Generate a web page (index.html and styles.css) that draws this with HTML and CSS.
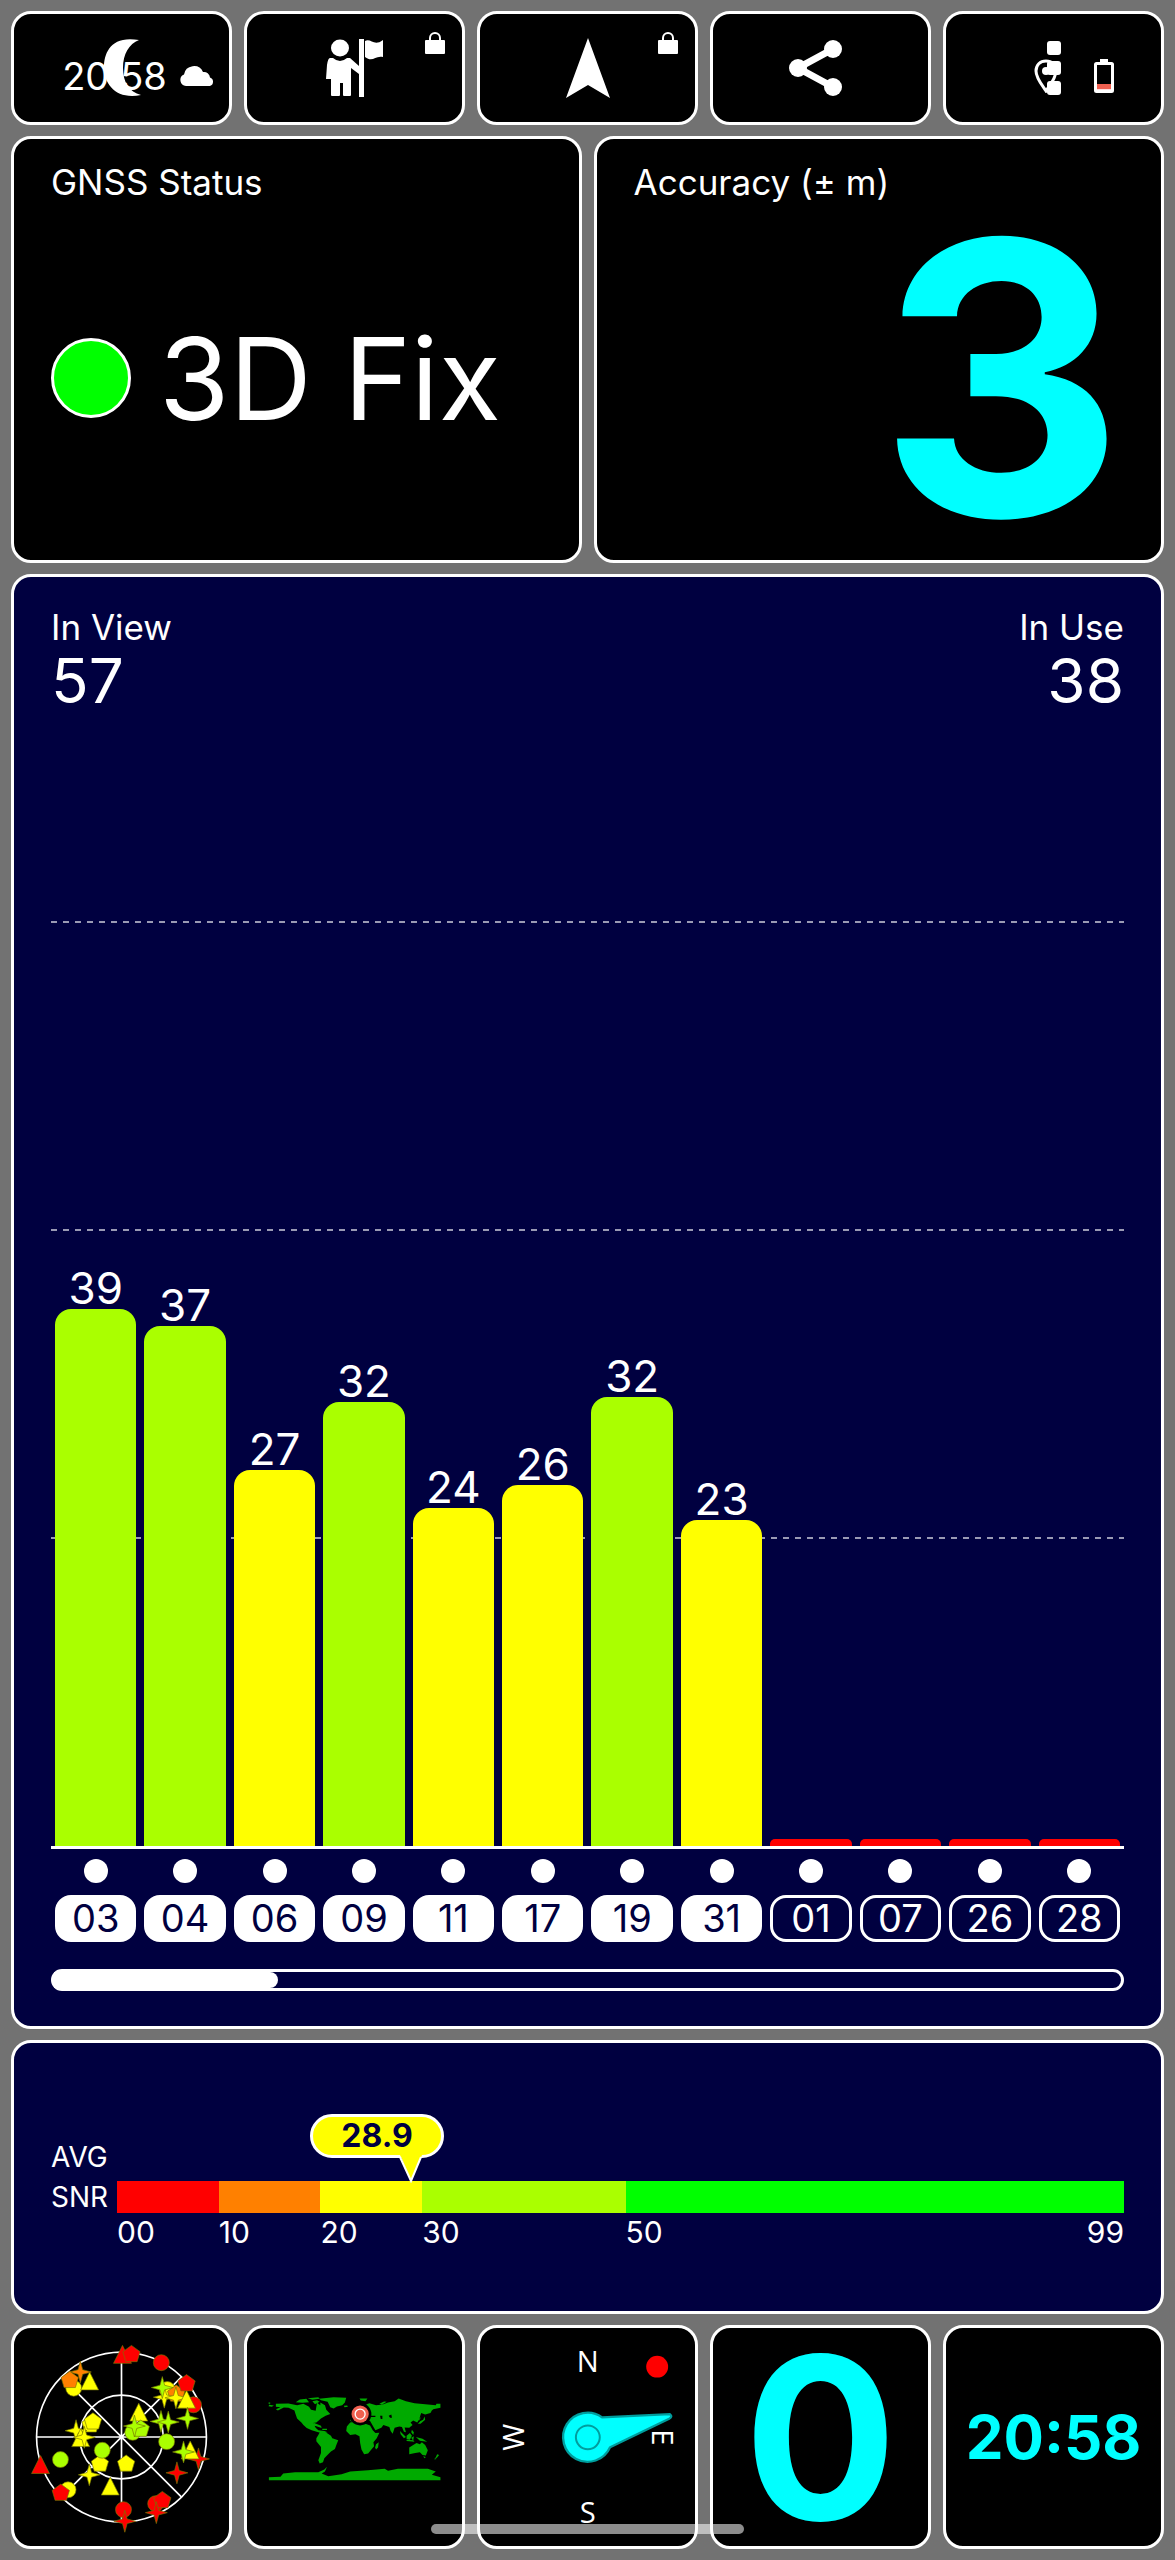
FILE: index.html
```html
<!DOCTYPE html>
<html lang="en">
<head>
    <meta charset="utf-8">
    <meta name="viewport" content="width=device-width, initial-scale=1">
    <title>GNSS Status</title>
    <link rel="stylesheet" href="styles.css">
</head>
<body>
<!-- shared symbols -->
<svg class="defs" width="0" height="0" aria-hidden="true">
    <symbol id="lock" viewBox="0 0 20 24">
        <path d="M5 11V7a5 5 0 0 1 10 0v4" fill="none" stroke="#fff" stroke-width="2"/>
        <rect x="0" y="9" width="20" height="14" rx="1" fill="#fff"/>
    </symbol>
    <circle id="c" r="24"/>
    <path id="t" d="M0-30 27 24H-27Z"/>
    <path id="p" d="M0-27 26-8 17 22H-17L-26-8Z"/>
    <path id="s" d="M0-33 7-7 33 0 7 7 0 33-7 7-33 0-7-7Z"/>
</svg>

<div class="screen">
    <div class="row five">
        <button class="tile small" type="button" aria-label="Night mode">
            <span class="status">
                <span class="clock">20:58</span>
                <svg width="36" height="22" viewBox="0 0 36 22"><path d="M7 21a6 6 0 0 1-2-11.500A10 10 0 0 1 24 7a6 6 0 0 1 7 5.500A4.500 4.500 0 0 1 31 21Z" fill="#fff"/></svg>
            </span>
            <svg class="over" width="38" height="58" viewBox="0 0 38 58"><path d="M36 1C8-4 1 14 1 28c0 18 13 33 37 28C26 53 20 43 20 29 20 15 26 5 36 1Z" fill="#fff"/></svg>
        </button>
        <button class="tile small" type="button" aria-label="Waypoints">
            <svg width="58" height="58" viewBox="0 0 58 58" fill="#fff">
                <ellipse cx="14" cy="9" rx="9" ry="8.500"/>
                <path d="M4 19h3q7 6 14 0h3l9 8v8l-8-6v27q0 1-1 1h-6q-1 0-1-1V44h-3v12q0 1-1 1H6q-1 0-1-1V40H0l1-14Q2 19 4 19Z"/>
                <path d="M33 0h5v58h-5zM39 2c6-3 9 6 18-1v17c-8-2-10 6-18 0Z"/>
            </svg>
            <svg class="badge" width="20" height="24"><use href="#lock"/></svg>
        </button>
        <button class="tile small" type="button" aria-label="Navigate">
            <svg width="46" height="60" viewBox="0 0 46 60"><path d="M23 0 45 60 23 47 1 60Z" fill="#fff"/></svg>
            <svg class="badge" width="20" height="24"><use href="#lock"/></svg>
        </button>
        <button class="tile small" type="button" aria-label="Share">
            <svg width="64" height="56" viewBox="0 0 64 56" fill="#fff">
                <circle cx="9" cy="28" r="9"/><circle cx="44" cy="9" r="9"/><circle cx="44" cy="47" r="9"/>
                <path d="M44 9 9 28 44 47" fill="none" stroke="#fff" stroke-width="7"/>
            </svg>
        </button>
        <button class="tile small" type="button" aria-label="More">
            <svg class="over" width="14" height="54" viewBox="0 0 14 54" fill="#fff"><rect y="0" width="14" height="14" rx="3"/><rect y="20" width="14" height="14" rx="3"/><rect y="40" width="14" height="14" rx="3"/></svg>
            <span class="status sensors">
                <svg width="24" height="34" viewBox="0 0 24 34"><path d="M12 2C6 2 2 6 2 12c0 7 6 14 10 20 4-6 10-13 10-20 0-6-4-10-10-10Z" fill="none" stroke="#fff" stroke-width="3"/><circle cx="12" cy="12" r="4" fill="#fff"/></svg>
                <svg width="20" height="34" viewBox="0 0 20 34"><path d="M6 0h8v4H6z" fill="#fff"/><rect x="1.500" y="4.500" width="17" height="28" rx="1" fill="none" stroke="#fff" stroke-width="3"/><path d="M3 25h14v5H3z" fill="#f06050"/><path d="M3 30h14v1H3z" fill="#fdd"/></svg>
            </span>
        </button>
    </div>

    <div class="row two">
        <section class="tile card">
            <h2>GNSS Status</h2>
            <div class="fix"><span class="led"></span>3D Fix</div>
        </section>
        <section class="tile card">
            <h2>Accuracy (± m)</h2>
            <div class="accuracy">3</div>
        </section>
    </div>

    <section class="tile blue chart">
        <div class="counts">
            <div><h2>In View</h2><div class="count">57</div></div>
            <div class="right"><h2>In Use</h2><div class="count">38</div></div>
        </div>
        <div class="plot">
            <div class="col">39<div class="bar lime" style="height: 47.4%"></div></div>
            <div class="col">37<div class="bar lime" style="height: 45.9%"></div></div>
            <div class="col">27<div class="bar yellow" style="height: 33.2%"></div></div>
            <div class="col">32<div class="bar lime" style="height: 39.2%"></div></div>
            <div class="col">24<div class="bar yellow" style="height: 29.8%"></div></div>
            <div class="col">26<div class="bar yellow" style="height: 31.9%"></div></div>
            <div class="col">32<div class="bar lime" style="height: 39.6%"></div></div>
            <div class="col">23<div class="bar yellow" style="height: 28.8%"></div></div>
            <div class="col"><div class="bar red" style="height: 0.6%"></div></div>
            <div class="col"><div class="bar red" style="height: 0.6%"></div></div>
            <div class="col"><div class="bar red" style="height: 0.6%"></div></div>
            <div class="col"><div class="bar red" style="height: 0.6%"></div></div>
        </div>
        <div class="sats">
            <div class="sat used"><i></i><span>03</span></div>
            <div class="sat used"><i></i><span>04</span></div>
            <div class="sat used"><i></i><span>06</span></div>
            <div class="sat used"><i></i><span>09</span></div>
            <div class="sat used"><i></i><span>11</span></div>
            <div class="sat used"><i></i><span>17</span></div>
            <div class="sat used"><i></i><span>19</span></div>
            <div class="sat used"><i></i><span>31</span></div>
            <div class="sat"><i></i><span>01</span></div>
            <div class="sat"><i></i><span>07</span></div>
            <div class="sat"><i></i><span>26</span></div>
            <div class="sat"><i></i><span>28</span></div>
        </div>
        <div class="scroll"><div class="thumb" style="width: 21%"></div></div>
    </section>

    <section class="tile blue snr">
        <div class="snr-name">AVG<br>SNR</div>
        <div class="gauge">
            <div class="marker" style="left: 29.2%">
                <div class="bubble">28.9</div>
                <svg class="tail" width="24" height="28" viewBox="0 0 24 28"><path d="M1 0 12 26 23 0Z" fill="#ff0"/><path d="M1 2 12 26 22 2" fill="none" stroke="#fff" stroke-width="2"/></svg>
            </div>
            <div class="scale colors">
                <div class="red"></div><div class="orange"></div><div class="yellow"></div><div class="lime"></div><div class="green"></div>
            </div>
            <div class="scale ticks">
                <div>00</div><div>10</div><div>20</div><div>30</div><div><span>50</span><span>99</span></div>
            </div>
        </div>
    </section>

    <div class="row five">
        <button class="tile page" type="button" aria-label="Sky view">
            <svg class="fill" viewBox="42 52 648 656">
                <g fill="none" stroke="#fff" stroke-width="5">
                    <circle cx="366" cy="380" r="256"/><circle cx="366" cy="380" r="126"/>
                    <path d="M110 380H622M366 124V636M185 199 547 561M547 199 185 561"/>
                </g>
                <g stroke="#777700" stroke-width="2">
                    <g fill="#f00">
                        <use href="#t" x="369" y="134"/><use href="#p" x="396" y="131"/><use href="#c" x="486" y="156"/><use href="#c" x="583" y="283"/>
                        <use href="#t" x="122" y="466"/><use href="#s" x="598" y="446"/>
                        <use href="#s" x="533" y="488"/><use href="#c" x="372" y="599"/><use href="#s" x="376" y="634"/><use href="#c" x="469" y="581"/>
                        <use href="#p" x="489" y="571"/><use href="#s" x="471" y="608"/>
                    </g>
                    <g fill="#ff0">
                        <use href="#c" x="222" y="233"/><use href="#t" x="270" y="214"/><use href="#c" x="504" y="237"/>
                    </g>
                    <g fill="#ff8000">
                        <use href="#s" x="242" y="184"/><use href="#p" x="210" y="209"/><use href="#p" x="531" y="250"/>
                    </g>
                    <g fill="#ff0">
                        <use href="#s" x="495" y="260"/><use href="#s" x="530" y="262"/><use href="#t" x="562" y="269"/><use href="#t" x="418" y="308"/>
                        <use href="#p" x="273" y="343"/><use href="#p" x="280" y="334"/><use href="#s" x="229" y="361"/><use href="#t" x="243" y="385"/>
                        <use href="#s" x="254" y="381"/><use href="#p" x="301" y="461"/><use href="#p" x="380" y="461"/><use href="#s" x="269" y="494"/>
                        <use href="#t" x="332" y="531"/><use href="#c" x="205" y="539"/><use href="#t" x="573" y="422"/>
                    </g>
                    <g fill="#af0">
                        <use href="#s" x="489" y="231"/><use href="#s" x="565" y="324"/><use href="#s" x="485" y="333"/><use href="#s" x="507" y="335"/>
                        <use href="#c" x="400" y="366"/><use href="#p" x="424" y="356"/><use href="#s" x="405" y="347"/><use href="#c" x="502" y="394"/>
                        <use href="#c" x="308" y="420"/><use href="#c" x="182" y="448"/><use href="#s" x="553" y="425"/>
                    </g>
                    <g fill="#f00"><use href="#p" x="562" y="219"/><use href="#p" x="183" y="549"/></g>
                </g>
            </svg>
        </button>
        <button class="tile page" type="button" aria-label="World map">
            <svg class="fill" viewBox="35 52 648 656">
                <g fill="#0a0">
                    <!-- americas -->
                    <path d="M122 280 160 279 186 284 205 280 222 289 228 298 242 301 246 277 256 284 256 276 270 284 274 298 286 311 272 316 258 324 244 336 234 338 242 352 250 360 268 362 278 366 262 369 250 366 230 360 215 353 205 344 199 336 186 324 181 310 178 300 160 292 146 291 128 300 122 296 136 290 122 289ZM100 276h5v4h-5zM102 283l14 2-6 4-10-2Z"/>
                    <path d="M182 275 194 267 214 265 222 275 202 277ZM218 263 250 260 254 265 232 268ZM232 272l14-3 8 5-14 7ZM224 341l14-3 20 8 2 7-18-6-10-1ZM262 355h14v4h-14z"/>
                    <path d="M252 265 296 260 334 262 330 276 322 284 306 288 296 294 286 290 278 274 258 269ZM327 286l10-1 2 4-10 1Z"/>
                    <path d="M256 363 270 364 288 376 292 384 310 390 304 405 300 416 288 424 276 436 268 444 264 456 254 460 250 450 258 428 258 410 244 393 244 384 250 374Z"/>
                    <!-- africa, europe, asia -->
                    <path d="M346 336 364 333 376 340 392 340 406 345 414 360 422 368 434 367 426 384 416 396 418 408 408 420 400 430 388 432 380 418 376 398 374 378 362 372 346 374 334 362 336 348ZM424 402l8-6-2 16-6 6-3-6Z"/>
                    <path d="M346 332 348 318 362 316 356 306 372 300 386 284 404 278 424 284 444 282 460 276 480 272 492 264 514 272 540 278 580 282 604 284 606 280 618 280 618 292 596 296 604 290 592 300 588 308 572 312 560 308 556 320 554 332 560 318 548 336 536 330 528 336 534 344 524 352 510 351 514 366 508 364 502 350 494 348 480 352 474 370 468 362 464 350 446 344 440 352 422 360 412 342 406 332 390 330 370 328 354 334ZM374 264h24l-6 8-14-2ZM434 280l14-7 8 1-14 8Z"/>
                    <path d="M496 362 514 380 508 384 498 372ZM516 376l10-8 6 8-6 12-10-2ZM530 382l8-4-2 14ZM532 358l6 8-2 8-6-8ZM516 388l20 2 4 4-24-2ZM544 380l20 5 14 9-22-3ZM550 340l8-8 8-4 4-10 2 10-14 12Z"/>
                    <path d="M524 412 536 404 546 398 556 402 562 396 572 404 580 420 574 436 564 434 556 426 542 428 524 432ZM566 438l8 2-4 4ZM608 432l6 2-6 8-6 4ZM602 442l-2 6 6-2Z"/>
                    <!-- antarctica -->
                    <path d="M101 501 136 500 144 490 180 486 250 486 268 478 276 470 270 484 260 490 280 498 320 492 346 484 400 480 450 476 460 482 490 476 580 476 604 484 592 494 618 501V510H101Z"/>
                </g>
                <path d="M462 316l8-4 2 10-6 0ZM436 316h7l0 10-5 0ZM408 316h14l0 4-14 0Z" fill="#000"/>
                <circle cx="376" cy="311" r="34" fill="#000"/>
                <circle cx="376" cy="311" r="26" fill="#f06050"/>
                <circle cx="376" cy="311" r="15" fill="none" stroke="#fff" stroke-width="4"/>
            </svg>
        </button>
        <button class="tile page" type="button" aria-label="Compass">
            <svg class="fill" viewBox="28 52 648 656">
                <g class="compass" fill="#fff" font-size="88" text-anchor="middle">
                    <text x="353" y="185">N</text>
                    <text x="353" y="640">S</text>
                    <text transform="translate(160 381) rotate(-90)">W</text>
                    <text transform="translate(545 381) rotate(90)">E</text>
                </g>
                <circle cx="562" cy="168" r="33" fill="#f00"/>
                <path d="M396 321 600 311Q610 318 598 325L420 411A74 74 0 1 1 396 321Z" fill="#0ff" stroke="#009d9d" stroke-width="7"/>
                <circle cx="353" cy="381" r="36" fill="none" stroke="#009d9d" stroke-width="6"/>
            </svg>
        </button>
        <button class="tile page" type="button" aria-label="Speed">
            <svg class="fill" viewBox="0 0 216 218">
                <text x="108" y="192" fill="#0ff" font-size="228" font-weight="700" text-anchor="middle">0</text>
            </svg>
        </button>
        <button class="tile page time" type="button">20:58</button>
    </div>
</div>
<div class="home"></div>
</body>
</html>
```
FILE: styles.css
```css
* {
    box-sizing: border-box;
}

body {
    margin: 0;
    background: #727272;
    color: #fff;
    font-family: Inter, "Open Sans", sans-serif;
    position: relative;
}

.defs {
    display: none;
}

.screen {
    display: flex;
    flex-direction: column;
    gap: 11px;
    padding: 11px;
}

.row {
    display: grid;
    gap: 12px;
}

.five {
    grid-template-columns: repeat(5, minmax(0, 1fr));
}

.two {
    grid-template-columns: repeat(2, minmax(0, 1fr));
}

.tile {
    position: relative;
    border: 3px solid #fff;
    border-radius: 20px;
    background: #000;
    color: #fff;
    font-family: inherit;
    padding: 0;
}

.blue {
    background: #000040;
}

h2 {
    margin: 0;
    font-size: 35px;
    line-height: 44px;
    font-weight: 400;
}

/* top buttons */
.small {
    display: grid;
    place-items: center;
    height: 114px;
}

.status,
.over {
    grid-area: 1 / 1;
}

.status {
    display: flex;
    align-items: center;
    gap: 12px;
    padding: 16px 0 0 34px;
}

.clock {
    font-size: 38px;
    line-height: 40px;
}

.sensors {
    gap: 36px;
    padding-left: 40px;
}

.badge {
    position: absolute;
    top: 17px;
    right: 17px;
}

/* status cards */
.card {
    display: flex;
    flex-direction: column;
    height: 427px;
    padding: 21px 37px 8px;
}

.fix {
    flex: 1;
    display: flex;
    align-items: center;
    gap: 28px;
    font-size: 114px;
    white-space: nowrap;
}

.led {
    width: 80px;
    height: 80px;
    border: 3px solid #fff;
    border-radius: 50%;
    background: #0f0;
}

.accuracy {
    flex: 1;
    color: #0ff;
    font-size: 380px;
    font-weight: 700;
    line-height: 348px;
    text-align: right;
}

/* satellite chart */
.chart {
    padding: 28px 37px 35px;
}

.counts {
    display: flex;
    justify-content: space-between;
}

.right {
    text-align: right;
}

.count {
    font-size: 62px;
    line-height: 64px;
}

.plot,
.sats {
    display: grid;
    grid-template-columns: repeat(12, minmax(0, 1fr));
}

.plot {
    --dash: repeating-linear-gradient(90deg, #9a9ab4 0 6px, transparent 6px 12px);
    height: 1136px;
    border-bottom: 3px solid #fff;
    background-image: var(--dash), var(--dash), var(--dash);
    background-size: 100% 2px;
    background-repeat: no-repeat;
    background-position: left bottom 307px, left bottom 615px, left bottom 923px;
}

.col {
    display: flex;
    flex-direction: column;
    justify-content: flex-end;
    min-height: 0;
    padding: 0 4px;
    font-size: 44px;
    line-height: 42px;
    text-align: center;
}

.bar {
    flex-shrink: 0;
    border-radius: 16px 16px 0 0;
}

.bar.red {
    border-radius: 5px 5px 0 0;
}

.red { background: #f00; }
.orange { background: #ff8000; }
.yellow { background: #ff0; }
.lime { background: #af0; }
.green { background: #0f0; }

.sat {
    display: flex;
    flex-direction: column;
    align-items: center;
    gap: 12px;
    padding: 10px 4px 0;
}

.sat i {
    width: 24px;
    height: 24px;
    border-radius: 50%;
    background: #fff;
}

.sat span {
    width: 100%;
    border: 3px solid #fff;
    border-radius: 16px;
    font-size: 38px;
    line-height: 41px;
    text-align: center;
}

.used span {
    background: #fff;
    color: #000040;
}

.scroll {
    height: 22px;
    margin-top: 27px;
    border: 3px solid #fff;
    border-radius: 11px;
}

.thumb {
    height: 100%;
    border-radius: 0 8px 8px 0;
    background: #fff;
}

/* average snr */
.snr {
    display: flex;
    min-height: 274px;
    padding: 94px 37px 0;
}

.snr-name {
    width: 66px;
    font-size: 28px;
    line-height: 40px;
}

.gauge {
    position: relative;
    flex: 1;
    padding-top: 44px;
}

.scale {
    display: grid;
    grid-template-columns: 10fr 10fr 10fr 20fr 49fr;
}

.colors {
    height: 32px;
}

.ticks {
    font-size: 30px;
    line-height: 38px;
}

.ticks div {
    display: flex;
    justify-content: space-between;
    min-width: 0;
}

.marker {
    position: absolute;
    top: -23px;
}

.bubble {
    width: 134px;
    margin-left: -101px;
    border: 3px solid #fff;
    border-radius: 22px;
    background: #ff0;
    color: #000040;
    font-size: 32px;
    font-weight: 700;
    line-height: 38px;
    text-align: center;
}

.tail {
    position: absolute;
    top: 41px;
    left: -12px;
}

/* bottom pages */
.page {
    display: grid;
    place-items: center;
    height: 224px;
}

.fill {
    width: 100%;
    height: 100%;
}

.compass {
    font-family: "Open Sans", sans-serif;
}

.time {
    color: #0ff;
    font-size: 60px;
    font-weight: 700;
    line-height: 1;
}

.home {
    position: absolute;
    bottom: 26px;
    left: 50%;
    width: 313px;
    height: 10px;
    margin-left: -157px;
    border-radius: 5px;
    background: rgba(255, 255, 255, 0.55);
}
```
